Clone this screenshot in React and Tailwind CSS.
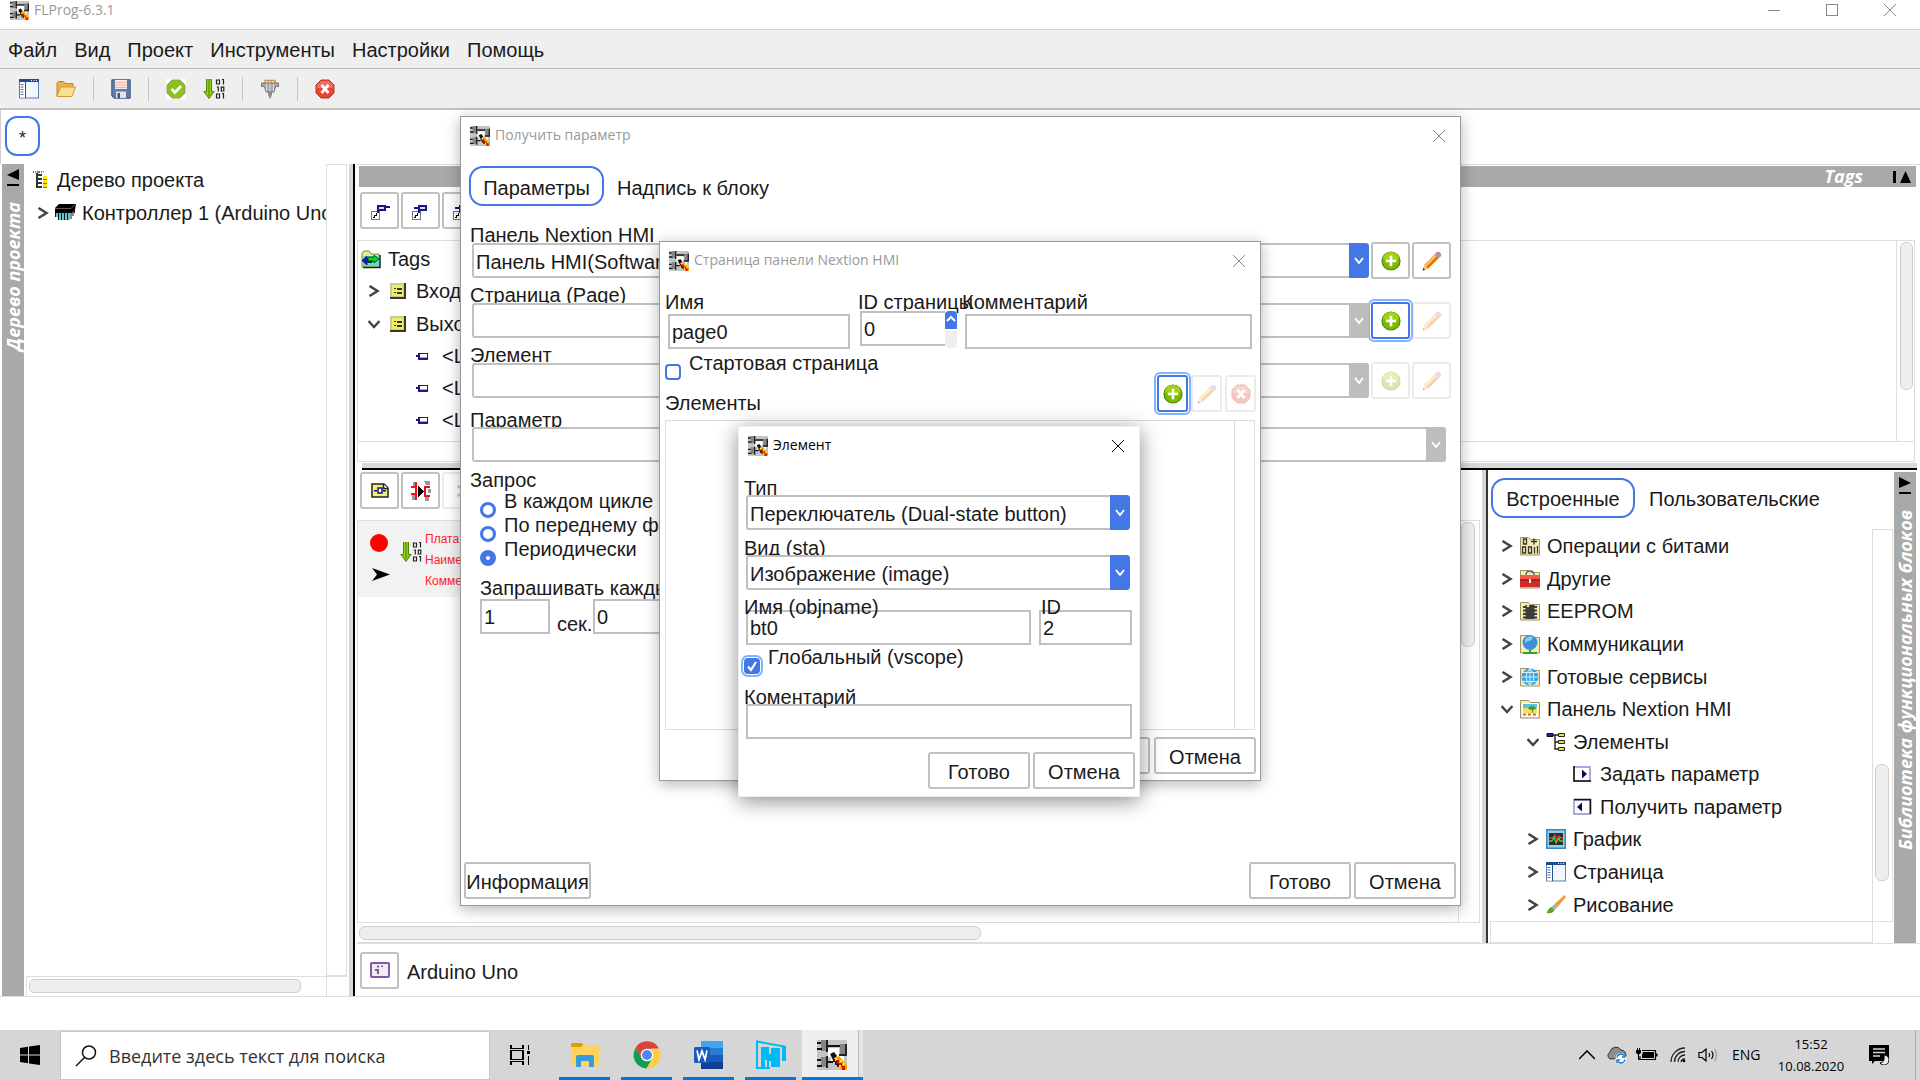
import clsx from 'clsx'

const menus = ['Файл', 'Вид', 'Проект', 'Инструменты', 'Настройки', 'Помощь']

const library = [
  { icon: 'bits', label: 'Операции с битами', level: 0 },
  { icon: 'toolbox', label: 'Другие', level: 0 },
  { icon: 'eeprom', label: 'EEPROM', level: 0 },
  { icon: 'comm', label: 'Коммуникации', level: 0 },
  { icon: 'web', label: 'Готовые сервисы', level: 0 },
  { icon: 'hmi', label: 'Панель Nextion HMI', level: 0, open: true },
  { icon: 'elements', label: 'Элементы', level: 1, open: true },
  { icon: 'set', label: 'Задать параметр', level: 2, leaf: true },
  { icon: 'get', label: 'Получить параметр', level: 2, leaf: true },
  { icon: 'chart', label: 'График', level: 1 },
  { icon: 'page', label: 'Страница', level: 1 },
  { icon: 'brush', label: 'Рисование', level: 1 }
]

const indents = ['pl-[11px]', 'pl-[37px]', 'pl-[83px]']

/* ---------- icons ---------- */

function AppIcon({ className = 'size-5' }) {
  return (
    <svg viewBox="0 0 30 30" className={clsx('shrink-0', className)}>
      <rect width="30" height="30" fill="#c4c4c4" />
      <path d="M11 8h11v7h5v7H14v-5h-3z" fill="#fff" />
      <path d="M4 0h6v11H4zM23 4h6v12h-6zM4 17h6v10H4z" fill="#858585" />
      <path d="M9 0h2v12H9zM22 14h7v2h-7zM9 16h2v12H9zM28 4h2v12h-2z" fill="#222" />
      <path d="M0 2h4v2H0zM0 8h5v2H0zM11 5h12v2H11zM0 19h4v2H0zM0 25h5v2H0zM11 21h5v2h-5zM13 14l4-2 3 4-4 4z" fill="#111" />
      <path d="M17 18l5-2 8 9v5h-6z" fill="#f5a300" />
      <path d="M19 20h3v3h3v3h3v4h-3v-3h-3v-3h-3z" fill="#d81400" />
      <path d="M18 18h2v2h-2zM23 20h2v2h-2zM22 25h2v2h-2zM26 23h2v2h-2z" fill="#ffee3c" />
      <path d="M16 19h2v2h2v3h2v3h-2v-2h-2v-3h-2z" fill="#4d1200" />
    </svg>
  )
}

function Plus() {
  return (
    <svg viewBox="0 0 20 20" className="size-5">
      <circle cx="10" cy="10" r="9" fill="#7fba00" stroke="#4f8a10" strokeWidth="1.2" />
      <path d="M2 8a8 7 0 0 1 16 0q-8 3-16 0z" fill="#a2d30f" />
      <path d="M10 4.800v10.400M4.800 10h10.400" stroke="#fff" strokeWidth="2.600" />
    </svg>
  )
}

function Pencil() {
  return (
    <svg viewBox="0 0 20 20" className="size-5">
      <path d="M2 14 14.500 1.500l4 4L6 18z" fill="#f7941d" />
      <path d="M3.200 15.200 14 4" stroke="#ffc471" strokeWidth="1.800" />
      <path d="M5 17 16 6" stroke="#c8680a" strokeWidth="1.200" />
      <path d="m12.500 3.500 2-2 4 4-2 2z" fill="#9da3ad" />
      <path d="M14.300 1.700Q16-.2 18 1.500q2.200 2 .4 4z" fill="#c77bb5" />
      <path d="M2 14 .8 19.200 6 18z" fill="#e8c793" />
      <path d="m1.300 17-.6 2.400 2.500-.6z" fill="#222" />
    </svg>
  )
}

function Stop() {
  return (
    <svg viewBox="0 0 20 20" className="size-5">
      <path d="M6 1h8l5 5v8l-5 5H6l-5-5V6z" fill="#e9442f" stroke="#b3382b" />
      <path d="M6 2h8l4 4v3H2V6z" fill="#f0705d" />
      <path d="m6.500 6 7 8m0-8-7 8" stroke="#fff" strokeWidth="2.800" />
    </svg>
  )
}

function PageIcon() {
  return (
    <svg viewBox="0 0 20 20" className="size-5">
      <rect x=".5" y=".5" width="19" height="18.500" fill="#f3f6fd" stroke="#5a7bb5" />
      <path d="M0 0h20v3H0z" fill="#1d4e93" />
      <path d="M12 1.500h1m1.500 0h1m1.500 0h1" stroke="#fff" />
      <path d="M1 3.500h5v15H1z" fill="#fff" />
      <path d="M1.500 5.500h3m-3 2.500h3m-3 2.500h3m-3 2.500h3m-3 2.500h3" stroke="#5b6f92" />
      <path d="M6.500 3v16" stroke="#27508f" />
    </svg>
  )
}

function FolderOpen() {
  return (
    <svg viewBox="0 0 20 20" className="size-5">
      <path d="M1 17V4l1.500-1.500h5L9 4.500h8V9H5z" fill="#e7b34b" stroke="#c08a28" />
      <path d="M1 17.500 4.500 8h15L16 17.500z" fill="#fbdf95" stroke="#d19d39" />
    </svg>
  )
}

function Save() {
  return (
    <svg viewBox="0 0 20 20" className="size-5">
      <path d="M.8.800h18.400v18.400H3L.8 17z" fill="#5f7ba6" stroke="#3f5680" />
      <path d="M4 1h12v9H4z" fill="#fbe9e4" />
      <path d="M4 3.500h12M4 6h12M4 8.500h12" stroke="#eab9ab" />
      <path d="M5 12.500h10V19H5z" fill="#dfe3ea" />
      <path d="M6.500 14H9v5H6.500z" fill="#3f5680" />
    </svg>
  )
}

function Verify() {
  return (
    <svg viewBox="0 0 20 20" className="size-5">
      <path d="M0 0h20v20H0z" fill="#fff" />
      <path d="M6 1h8l5 5v8l-5 5H6l-5-5V6z" fill="#8cc21a" stroke="#8e9d7c" />
      <path d="m5.500 10 3.500 3.500L15 7" fill="none" stroke="#fff" strokeWidth="2.600" />
    </svg>
  )
}

// green arrow with a column of bits
function Upload({ className = 'h-5 w-[22px]' }) {
  return (
    <svg viewBox="0 0 22 20" className={className}>
      <path d="M3 0h6v12h3l-6 8-6-8h3z" fill="#8fcf12" />
      <path d="M3.500 0v12.500H1l5 6.800 5-6.800H8.500V0M6 0v17" fill="none" stroke="#4d8a0c" />
      <g fill="none" stroke="#222" strokeWidth="1.200">
        <path d="M13.500 1h3v4h-3zM19 .5h1.500V5.500M13.800 8h1.500v4.500m3-4.300h2.500v3.800h-2.500zM13.500 15h3v4h-3zM19 14.500h1.500v5" />
      </g>
    </svg>
  )
}

function Plug() {
  return (
    <svg viewBox="0 0 20 20" className="size-5">
      <path d="M5 4V1.500h10V4" fill="none" stroke="#c99b4e" strokeWidth="1.500" />
      <path d="M8.500 1v3m3-3v3" stroke="#c99b4e" />
      <path d="M1.500 4h17v3.500h-3L14 13H6L4.500 7.500h-3z" fill="#a9a9a9" stroke="#777" />
      <path d="M6.500 5v7m3.500-7v7m3.500-7v7" stroke="#dcdcdc" />
      <path d="M8 13h4v3l-2 4-2-4z" fill="#8c8c8c" />
    </svg>
  )
}

function Chip() {
  return (
    <svg viewBox="0 0 21 17" className="h-[17px] w-[21px] shrink-0">
      <path d="M4 0h17l-1 6-3 3H0V4z" fill="#000" />
      <path d="M0 4.500h16l4-4" fill="none" stroke="#888" strokeWidth=".7" />
      <path d="M2 9v4m3-4v7m3-7v7m3-7v7m3-7v7" stroke="#39c4cc" strokeWidth="1.700" />
      <path d="M.5 9v4m3-4v7m3-7v7m3-7v7m3-7v7m3.500-8v7m2-9v6m1.500-8v5" stroke="#111" />
    </svg>
  )
}

function ProjectTreeIcon() {
  return (
    <svg viewBox="0 0 16 20" className="h-5 w-4 shrink-0" shapeRendering="crispEdges">
      <path d="M0 1h1v2H0zm2 0h1v2H2zm6 0h1v2H8z" fill="#777" />
      <path d="M4 1h3v2H4zM10 1h1v1h-1z" fill="#29b329" />
      <path d="M3 3h2v15H3zM5 4h4v2H5zM5 8h4v2H5zM5 12h4v2H5zM5 16h4v2H5z" fill="#333" />
      <path d="M10 6h4v3h-4zM10 10h4v3h-4zM10 14h4v3h-4z" fill="#ffe600" />
      <path d="M10 9h4v1h-4zM10 13h4v1h-4zM10 17h4v1h-4z" fill="#8a8000" />
    </svg>
  )
}

function TagsFolder() {
  return (
    <svg viewBox="0 0 20 20" className="size-5 shrink-0">
      <path d="M1 18V4l2-2h5l2 3h8v13z" fill="#d9ef9c" stroke="#6a8f50" />
      <path d="M2 7h16v10H2z" fill="#55e0cf" />
      <path d="m1 11.500 5-4.500v2.500h5v4H6V16z" fill="#001ee0" stroke="#000" strokeWidth=".6" />
      <path d="m18 10-5-4v2H7v4h6v2z" fill="#12d312" stroke="#000" strokeWidth=".6" />
      <path d="M2 18.500h17V6" fill="none" stroke="#222" strokeWidth="1.500" />
    </svg>
  )
}

function TagGroup() {
  return (
    <svg viewBox="0 0 16 16" className="size-4 shrink-0" shapeRendering="crispEdges">
      <path d="M0 0h16v16H0z" fill="#3a3a2c" />
      <path d="M0 0h14v14H0z" fill="#c9c9a0" />
      <path d="M2 2h11v11H2z" fill="#f0ee62" />
      <path d="M4 5h2v1H4zM7 5h5v2H7zM4 9h2v1H4zM7 9h5v2H7z" fill="#333" />
    </svg>
  )
}

function TagItem() {
  return (
    <svg viewBox="0 0 12 8" className="h-2 w-3 shrink-0" shapeRendering="crispEdges">
      <path d="M0 3h3v2H0z" fill="#1a1a8c" />
      <path d="M2 1h10v7H2z" fill="#1a1a8c" />
      <path d="M4 2h7v3H4z" fill="#fff" />
      <path d="M4 5h7v1H4z" fill="#aaa" />
    </svg>
  )
}

function BlockRef({ wide }) {
  return (
    <svg viewBox="0 0 20 18" className="h-[18px] w-5" shapeRendering="crispEdges">
      <path d="M1 9h8v8H1z" fill="#fff" stroke="#777" />
      <path d="M3 15h1v-2h2v-2h1v3H5v2H3z" fill="#000" />
      <path d="M7 3h9v6H9v2H7z" fill="#16168c" />
      <path d="M9 5h5v2H9z" fill="#ddd" />
      {wide ? <path d="M16 4h4v2h-4z" fill="#16168c" /> : <path d="M3 5h4v2H3z" fill="#16168c" />}
    </svg>
  )
}

function SchemeIcon() {
  return (
    <svg viewBox="0 0 18 15" className="h-[15px] w-[18px]">
      <path d="M1 1h12l4 4v9H1z" fill="#f5ee6a" stroke="#222" strokeWidth="1.500" />
      <path d="M12.500 1v4.500H17" fill="#fff" stroke="#222" strokeWidth="1.500" />
      <path d="M7 5h4v5H7z" fill="#fff" stroke="#16168c" strokeWidth="1.500" />
      <path d="M3 7h3v1.500H3zM12 7h3v1.500h-3z" fill="#16168c" />
    </svg>
  )
}

function ConvertIcon() {
  return (
    <svg viewBox="0 0 20 20" className="size-5" shapeRendering="crispEdges">
      <path d="M2 1h3v5H2zM1 13h4v6H1zM13 0h6v4h-4zM14 15h4v5h-4zM17 8h3v4h-3z" fill="#999" />
      <path d="M4 1h2v18H4zM0 5h5v2H0zM0 12h5v2H0z" fill="#f01414" />
      <path d="M7 5l6 5-6 6z" fill="#000" />
      <path d="M13 5h6v2h-4v7h4v2h-6z" fill="#e01414" />
    </svg>
  )
}

function LibIcon({ name }) {
  const folder = <path d="M.5 19V1.500h8l2 2h9V19z" fill="#f6ecb0" stroke="#9c946c" />
  const art = {
    bits: (
      <>
        {folder}
        <path d="M3.500 3h3v5h-3zM14 2.500v6M11 5.500h6M2.500 11h3v6h-3zM8.500 11h3v6h-3zM14.500 11v6.500M17.500 10v7.500" fill="none" stroke="#333" strokeWidth="1.300" />
      </>
    ),
    toolbox: (
      <>
        {folder}
        <path d="M6 6q0-4 4-4t4 4" fill="none" stroke="#666" strokeWidth="1.500" />
        <path d="M0 6h20v12H0z" fill="#d42a26" />
        <path d="M0 6h20v4H0z" fill="#ef5a4d" />
        <path d="M0 11h20" stroke="#8e1512" />
        <path d="M9 10h2v4H9z" fill="#eee" />
      </>
    ),
    eeprom: (
      <>
        {folder}
        <path d="M5.500 4h9v14h-9z" fill="#3c3c3c" />
        <path d="M3 6h14M3 9.500h14M3 13h14M3 16.500h14" stroke="#3c3c3c" strokeWidth="1.800" />
        <circle cx="8" cy="5" r="1.200" fill="#f6ecb0" />
      </>
    ),
    comm: (
      <>
        {folder}
        <circle cx="10" cy="8.500" r="7.500" fill="#3d8ed8" />
        <path d="M5 5q4-4 8-2-1 4-4 4t-4 3z" fill="#8cc6f2" />
        <path d="M10 16v3M3 19h14" stroke="#2fa52f" strokeWidth="2" />
      </>
    ),
    web: (
      <>
        {folder}
        <circle cx="10" cy="10" r="8.500" fill="#35a3e0" />
        <path d="M10 1.500v17M1.500 10h17M3 5.500h14M3 14.500h14M10 1.500q-8 8.500 0 17 8-8.500 0-17" fill="none" stroke="#d6f0ff" />
      </>
    ),
    hmi: (
      <>
        {folder}
        <path d="M2 4h16v14H2z" fill="#fff" />
        <path d="M3 5h14v4H3z" fill="#5cc0ea" />
        <path d="M3 9h14v5H3z" fill="#f3e15c" />
        <path d="M8 10q1-3 4-3t4 3l-3 1v3h-1v-3z" fill="#4a9a28" />
        <path d="M3 15.500h3m2 0h3m2 0h3" stroke="#e2582c" strokeWidth="2" />
      </>
    ),
    elements: (
      <>
        <path d="M7 3h5M9 3v14h4M9 10h4" fill="none" stroke="#222" strokeWidth="1.400" />
        <path d="M1 1.500h6v3H1z" fill="#1a22b0" stroke="#111" />
        <path d="M12.500 1.500h6v3h-6zM12.500 8.500h6v3h-6zM12.500 15.500h6v3h-6z" fill="#ece531" stroke="#222" />
      </>
    ),
    set: (
      <>
        <path d="M1 3h16v14H1z" fill="#fff" stroke="#8c8cd0" strokeWidth="1.400" />
        <path d="M1 2v15h17" fill="none" stroke="#111" strokeWidth="1.500" />
        <path d="M9 5.500 14 10l-5 4.500z" fill="#0a0a50" />
      </>
    ),
    get: (
      <>
        <path d="M1 3h16v14H1z" fill="#fff" stroke="#8c8cd0" strokeWidth="1.400" />
        <path d="M1 2.500h16.500V17" fill="none" stroke="#111" strokeWidth="1.500" />
        <path d="M9 5.500 4 10l5 4.500z" fill="#0a0a50" />
      </>
    ),
    chart: (
      <>
        <path d="M.8.800h18.400v18.400H.8z" fill="#8fd0f0" stroke="#3688b5" strokeWidth="1.500" />
        <path d="M3 4h14v12H3z" fill="#2d2d2d" />
        <path d="M3 9h4l2-3 2 5 2-4 2 2h2" fill="none" stroke="#ee2b2b" strokeWidth="1.500" />
        <path d="M3 12h3l2-4 2 6 3-5 1 3h3" fill="none" stroke="#32d64a" strokeWidth="1.300" />
      </>
    ),
    brush: (
      <>
        <path d="M18.500 0 20 2 11.500 12 8.500 9z" fill="#f29a38" />
        <path d="m8.500 9 3 3-3 3-3-3z" fill="#a9b0b8" />
        <path d="M5.500 12q-3 1-5 6 6 1 8-3z" fill="#5da61c" />
      </>
    )
  }
  if (name === 'page') return <PageIcon />
  return (
    <svg viewBox="0 0 20 20" className="size-5 shrink-0">
      {art[name]}
    </svg>
  )
}

function Chevron({ open }) {
  return (
    <svg viewBox="0 0 12 12" className="size-3 shrink-0" fill="none" stroke="#444" strokeWidth="2.500">
      {open ? <path d="M.5 3 6 9l5.500-6" /> : <path d="m1.500 1 8 5-8 5" />}
    </svg>
  )
}

function Cross({ className }) {
  return (
    <svg viewBox="0 0 12 12" className={clsx('size-3', className)} stroke="currentColor">
      <path d="m0 0 12 12M12 0 0 12" />
    </svg>
  )
}

/* ---------- form parts ---------- */

function Button({ children, className }) {
  return (
    <button type="button" className={clsx('h-[37px] rounded-[3px] border-2 border-[#c0c0c0] bg-white pt-[2px] leading-6', className)}>
      {children}
    </button>
  )
}

function IconButton({ label, children, className = 'w-[39px]', focused, disabled }) {
  return (
    <button
      type="button"
      aria-label={label}
      disabled={disabled}
      className={clsx(
        'flex h-[37px] shrink-0 items-center justify-center rounded-[3px] border-2 bg-white',
        focused ? 'border-[#4477e6] outline-2 outline-offset-1 outline-[#80b4ff]' : 'border-[#c0c0c0]',
        disabled && 'opacity-30',
        className
      )}
    >
      {children}
    </button>
  )
}

function Label({ htmlFor, children, className = 'h-[14px]' }) {
  return (
    <label htmlFor={htmlFor} className={clsx('block leading-[14px] whitespace-nowrap', className)}>
      {children}
    </label>
  )
}

function TextField({ id, value, label, className }) {
  return (
    <input
      id={id}
      type="text"
      aria-label={label}
      defaultValue={value}
      className={clsx('block h-[35px] border-2 border-[#c0c0c0] bg-white pt-[2px] pl-[2px] outline-none', className)}
    />
  )
}

function Combo({ id, value = '', disabled, className }) {
  return (
    <div className={clsx('relative h-[35px]', className)}>
      <select
        id={id}
        disabled={disabled}
        defaultValue={value}
        className="block h-full w-full appearance-none rounded-[3px] border-2 border-[#c0c0c0] bg-white pt-[2px] pl-[2px] outline-none"
      >
        <option>{value}</option>
      </select>
      <span
        className={clsx(
          'pointer-events-none absolute inset-y-0 right-0 flex w-5 items-center justify-center rounded-r-[4px]',
          disabled ? 'bg-[#bdbdbd]' : 'bg-[#4477e6]'
        )}
      >
        <svg viewBox="0 0 10 8" className="h-2 w-[10px]" fill="none" stroke="#fff" strokeWidth="2">
          <path d="m1 1 4 5 4-5" />
        </svg>
      </span>
    </div>
  )
}

function Check({ id, label, checked }) {
  return (
    <div className="flex h-5 items-start gap-2">
      <span className="relative mt-1 size-4 shrink-0">
        <input
          id={id}
          type="checkbox"
          defaultChecked={checked}
          className={clsx(
            'block size-4 appearance-none rounded-[4px] border-2 border-[#4477e6] checked:bg-[#4477e6]',
            checked && 'outline-2 outline-offset-1 outline-[#80b4ff]'
          )}
        />
        {checked && (
          <svg viewBox="0 0 16 16" className="pointer-events-none absolute inset-0 size-4" fill="none" stroke="#fff" strokeWidth="2.200">
            <path d="m4 8.500 3 3.500 5-8" />
          </svg>
        )}
      </span>
      <label htmlFor={id} className="leading-[6px] whitespace-nowrap">{label}</label>
    </div>
  )
}

function Radio({ id, label, checked }) {
  return (
    <div className="flex h-6 items-start gap-2">
      <input
        id={id}
        type="radio"
        name="request"
        defaultChecked={checked}
        className="mt-1 block size-4 shrink-0 appearance-none rounded-full border-[3px] border-[#4477e6] bg-white checked:border-[6px]"
      />
      <label htmlFor={id} className="leading-[6px] whitespace-nowrap">{label}</label>
    </div>
  )
}

function Dialog({ title, active, className, children }) {
  return (
    <section
      role="dialog"
      aria-label={title}
      className={clsx(
        'absolute flex flex-col border bg-white',
        active ? 'border-[#f0f0f0] shadow-[0_4px_20px_rgba(0,0,0,0.45)]' : 'border-[#9a9a9a] shadow-[0_3px_14px_rgba(0,0,0,0.3)]',
        className
      )}
    >
      <header className="flex h-[37px] shrink-0 items-center gap-[5px] pr-[15px] pl-[9px]">
        <AppIcon />
        <h2 className={clsx("flex-1 pb-[2px] font-['Open_Sans','Noto_Sans',sans-serif] text-[14px]", active ? 'text-black' : 'text-[#999]')}>
          {title}
        </h2>
        <button type="button" aria-label="Закрыть" className={active ? 'text-black' : 'text-[#888]'}>
          <Cross />
        </button>
      </header>
      {children}
    </section>
  )
}

function ParameterDialog() {
  return (
    <Dialog title="Получить параметр" className="top-[116px] left-[460px] h-[790px] w-[1001px]">
      <nav className="mt-3 flex items-center pl-2">
        <button type="button" className="h-10 w-[135px] rounded-[14px] border-2 border-[#4477e6] pt-1">Параметры</button>
        <button type="button" className="px-[13px] pt-1">Надпись к блоку</button>
      </nav>

      <form className="mt-[22px] flex flex-1 flex-col pr-[9px] pl-[9px]">
        <Label htmlFor="panel">Панель Nextion HMI</Label>
        <div className="flex items-center gap-[2px] pl-[2px]">
          <Combo id="panel" value="Панель HMI(SoftwareSerial)" className="flex-1" />
          <IconButton label="Добавить панель"><Plus /></IconButton>
          <IconButton label="Изменить панель"><Pencil /></IconButton>
        </div>

        <Label htmlFor="page" className="mt-[9px] h-[14px]">Страница (Page)</Label>
        <div className="flex items-center gap-[2px] pl-[2px]">
          <Combo id="page" disabled className="flex-1" />
          <IconButton label="Добавить страницу" focused><Plus /></IconButton>
          <IconButton label="Изменить страницу" disabled><Pencil /></IconButton>
        </div>

        <Label htmlFor="element" className="mt-[9px] h-[14px]">Элемент</Label>
        <div className="flex items-center gap-[2px] pl-[2px]">
          <Combo id="element" disabled className="flex-1" />
          <IconButton label="Добавить элемент" disabled><Plus /></IconButton>
          <IconButton label="Изменить элемент" disabled><Pencil /></IconButton>
        </div>

        <Label htmlFor="param" className="mt-[14px] h-[14px]">Параметр</Label>
        <Combo id="param" disabled className="mr-[5px] ml-[2px]" />

        <fieldset className="mt-[11px]">
          <legend className="block h-[14px] leading-[14px]">Запрос</legend>
          <div className="mt-[11px] pl-[10px]">
            <Radio id="every" label="В каждом цикле" />
            <Radio id="front" label="По переднему фронту" />
            <Radio id="period" label="Периодически" checked />
            <Label htmlFor="seconds" className="mt-[11px] h-[14px]">Запрашивать каждые</Label>
            <div className="mt-1 flex items-end">
              <TextField id="seconds" value="1" className="w-[70px]" />
              <span className="w-[43px] pt-[2px] pl-[7px] leading-5">сек.</span>
              <TextField label="Миллисекунды" value="0" className="w-[70px]" />
            </div>
          </div>
        </fieldset>
      </form>

      <footer className="flex gap-[3px] pr-1 pb-[6px] pl-[3px]">
        <Button className="mr-auto w-[127px]">Информация</Button>
        <Button className="w-[102px]">Готово</Button>
        <Button className="w-[102px]">Отмена</Button>
      </footer>
    </Dialog>
  )
}

function PageDialog() {
  return (
    <Dialog title="Страница панели Nextion HMI" className="top-[241px] left-[659px] h-[540px] w-[602px]">
      <form className="mt-4 flex flex-1 flex-col pr-[5px] pl-[5px]">
        <div className="flex pr-[3px]">
          <div className="w-[193px]">
            <Label htmlFor="page-name">Имя</Label>
            <TextField id="page-name" value="page0" className="mt-[5px] ml-[3px] w-[182px]" />
          </div>
          <div className="w-[104px]">
            <Label htmlFor="page-id">ID страницы</Label>
            <div className="mt-[2px] ml-[2px] flex items-start">
              <TextField id="page-id" value="0" className="w-[85px] border-r-0" />
              <div className="flex w-3 flex-col gap-[2px]">
                <button type="button" aria-label="Больше" className="flex h-[18px] justify-center rounded-t-[4px] bg-[#4477e6] pt-1">
                  <svg viewBox="0 0 10 8" className="h-2 w-[10px]" fill="none" stroke="#fff" strokeWidth="2">
                    <path d="m1 6 4-4 4 4" />
                  </svg>
                </button>
                <button type="button" aria-label="Меньше" className="h-[17px] rounded-b-[4px] bg-[#eee]" />
              </div>
            </div>
          </div>
          <div className="flex-1">
            <Label htmlFor="page-comment">Комментарий</Label>
            <TextField id="page-comment" className="mt-[5px] ml-[3px] w-[287px]" />
          </div>
        </div>

        <div className="mt-[11px] flex h-[60px] justify-between">
          <div>
            <Check id="start-page" label="Стартовая страница" />
            <h3 className="mt-4 leading-[14px]">Элементы</h3>
          </div>
          <div className="mt-[15px] -mr-px flex items-start gap-[3px]">
            <IconButton label="Добавить" className="w-[31px]" focused><Plus /></IconButton>
            <IconButton label="Изменить" className="w-[31px]" disabled><Pencil /></IconButton>
            <IconButton label="Удалить" className="w-[31px]" disabled><Stop /></IconButton>
          </div>
        </div>

        <div className="flex flex-1 border border-[#dcdcdc]">
          <div className="flex-1" />
          <div className="w-5 border-l border-[#dcdcdc]" />
        </div>
      </form>

      <footer className="mt-[7px] flex justify-end gap-1 pr-1 pb-[6px]">
        <Button className="w-[102px]">Готово</Button>
        <Button className="w-[102px]">Отмена</Button>
      </footer>
    </Dialog>
  )
}

function ElementDialog() {
  return (
    <Dialog title="Элемент" active className="top-[426px] left-[738px] w-[402px]">
      <form className="mt-[17px] pr-[7px] pl-[5px]">
        <Label htmlFor="type">Тип</Label>
        <Combo id="type" value="Переключатель (Dual-state button)" className="mr-[2px] ml-[2px]" />
        <Label htmlFor="sta" className="mt-[11px] h-[14px]">Вид (sta)</Label>
        <Combo id="sta" value="Изображение (image)" className="mr-[2px] ml-[2px]" />

        <div className="mt-[10px] flex gap-2 pl-[2px]">
          <div className="flex-1">
            <Label htmlFor="objname" className="-ml-[2px] h-[10px]">Имя (objname)</Label>
            <TextField id="objname" value="bt0" className="w-full" />
          </div>
          <div className="w-[93px]">
            <Label htmlFor="obj-id" className="h-[10px] pl-[2px]">ID</Label>
            <TextField id="obj-id" value="2" className="w-full" />
          </div>
        </div>

        <div className="mt-[9px]">
          <Check id="vscope" label="Глобальный (vscope)" checked />
        </div>
        <Label htmlFor="comment" className="mt-4 h-[14px]">Коментарий</Label>
        <div className="pl-[2px]">
          <TextField id="comment" className="w-full" />
        </div>
      </form>

      <footer className="mt-[13px] flex justify-end gap-[3px] pr-1 pb-[7px]">
        <Button className="w-[102px]">Готово</Button>
        <Button className="w-[102px]">Отмена</Button>
      </footer>
    </Dialog>
  )
}

/* ---------- main window ---------- */

function SideStrip({ title, flip, className }) {
  return (
    <aside className={clsx('flex shrink-0 flex-col items-center bg-[#a9a9a9] text-white', className)}>
      <button type="button" aria-label={title} className="mt-[5px]">
        <svg viewBox="0 0 12 18" className="h-[18px] w-3" fill="#000">
          {flip ? <path d="m0 0 12 6-12 5z" /> : <path d="M12 0v11L0 6z" />}
          <path d="M0 15h12v2H0z" />
        </svg>
      </button>
      <span className="mt-[15px] rotate-180 font-['Open_Sans','Noto_Sans',sans-serif] text-[18px] leading-[22px] font-bold whitespace-nowrap italic [writing-mode:vertical-rl]">
        {title}
      </span>
    </aside>
  )
}

function TopBars() {
  const sep = <span className="h-6 w-px bg-[#c4c4c4]" />
  return (
    <>
      <header className="flex h-[29px] items-start justify-between pl-[10px]">
        <div className="flex items-center gap-[5px]">
          <AppIcon className="size-[19px]" />
          <span className="font-['Open_Sans','Noto_Sans',sans-serif] text-[14px] leading-5 text-[#999]">FLProg-6.3.1</span>
        </div>
        <div className="flex gap-[46px] pt-1 pr-6 text-[#888]">
          <button type="button" aria-label="Свернуть" className="flex size-3 items-center">
            <span className="h-px w-full bg-current" />
          </button>
          <button type="button" aria-label="Развернуть" className="size-3 border border-current" />
          <button type="button" aria-label="Закрыть окно"><Cross /></button>
        </div>
      </header>
      <nav className="flex h-10 items-center gap-[17px] border-t border-b border-t-[#d6d6d6] border-b-[#b8b8b8] bg-[#efefef] pt-[2px] pl-[8px]">
        {menus.map((m) => (
          <button key={m} type="button">{m}</button>
        ))}
      </nav>
      <div className="flex h-[41px] items-center gap-[17px] border-b-2 border-[#c2c2c2] bg-[#efefef] pl-[19px]">
        <button type="button" aria-label="Новый"><PageIcon /></button>
        <button type="button" aria-label="Открыть"><FolderOpen /></button>
        {sep}
        <button type="button" aria-label="Сохранить"><Save /></button>
        {sep}
        <button type="button" aria-label="Проверить"><Verify /></button>
        <button type="button" aria-label="Загрузить"><Upload /></button>
        {sep}
        <button type="button" aria-label="Порт"><Plug /></button>
        {sep}
        <button type="button" aria-label="Закрыть проект"><Stop /></button>
      </div>
    </>
  )
}

function ProjectTree() {
  return (
    <div className="flex w-[323px] shrink-0 flex-col">
      <div className="flex min-h-0 flex-1">
        <ul className="flex-1 overflow-hidden whitespace-nowrap">
          <li className="flex h-8 items-center gap-2 pl-[9px]">
            <ProjectTreeIcon />
            Дерево проекта
          </li>
          <li className="flex h-[33px] items-center gap-[6px] pl-[13px]">
            <Chevron />
            <Chip />
            Контроллер 1 (Arduino Uno)
          </li>
        </ul>
        <div className="w-[21px] border border-[#dedede]" />
      </div>
      <div className="ml-[2px] flex h-5 border-t border-l border-[#dedede]">
        <div className="mt-[2px] ml-[2px] h-[14px] w-[272px] rounded-[5px] border border-[#cfcfcf] bg-[#eee]" />
        <div className="ml-auto w-[21px] border-l border-[#dedede]" />
      </div>
    </div>
  )
}

function TagsPanel() {
  return (
    <>
      <header className="mt-px mr-1 ml-[2px] flex h-[21px] items-center justify-end bg-[#a9a9a9] pr-[5px] text-white">
        <span className="mr-[30px] pb-[2px] font-['Open_Sans','Noto_Sans',sans-serif] text-[18px] leading-5 font-bold italic">Tags</span>
        <button type="button" aria-label="Свернуть Tags">
          <svg viewBox="0 0 18 12" className="h-3 w-[18px]" fill="#000">
            <path d="M0 0h3v12H0zM7 12l5.500-12L18 12z" />
          </svg>
        </button>
      </header>
      <div className="mt-[5px] flex gap-[2px] pl-[3px]">
        <IconButton label="Блок"><BlockRef wide /></IconButton>
        <IconButton label="Вход"><BlockRef /></IconButton>
        <IconButton label="Выход"><BlockRef /></IconButton>
      </div>
      <div className="mt-[11px] mr-[5px] flex h-[222px] shrink-0 flex-col border border-[#dedede]">
        <div className="flex flex-1">
          <ul className="flex-1 pt-[2px] whitespace-nowrap">
            <li className="flex h-8 items-center gap-[7px] pl-[3px]"><TagsFolder />Tags</li>
            <li className="flex h-8 items-center gap-[10px] pl-[10px]"><Chevron /><TagGroup />Входы</li>
            <li className="flex h-[33px] items-center gap-[10px] pl-[10px]"><Chevron open /><TagGroup />Выходы</li>
            {[1, 2, 3].map((n) => (
              <li key={n} className="flex h-8 items-center gap-[14px] pl-[58px]"><TagItem />&lt;L{n}&gt;</li>
            ))}
          </ul>
          <div className="w-[18px] border-l border-[#dedede]">
            <div className="mt-[1px] ml-[3px] h-[148px] w-[13px] rounded-[6px] border border-[#cfcfcf] bg-[#eee]" />
          </div>
        </div>
        <div className="h-5 border-t border-[#dedede]" />
      </div>
      <div className="mt-px mr-[3px] ml-[5px] h-[7px] shrink-0 border-b-2 border-black bg-[#d9d9d9]" />
    </>
  )
}

function Canvas() {
  return (
    <div className="flex min-w-0 flex-1 flex-col">
      <div className="mt-[2px] flex gap-[2px] pl-[3px]">
        <IconButton label="Схема"><SchemeIcon /></IconButton>
        <IconButton label="Преобразовать"><ConvertIcon /></IconButton>
        <IconButton label="Вверх" disabled><Chevron /></IconButton>
      </div>
      <div className="mt-[11px] flex flex-1 border border-[#dedede]">
        <div className="flex-1">
          <div className="flex h-[76px] items-start bg-[#f2f2f2] pl-[12px]">
            <svg viewBox="0 0 20 56" className="mt-3 h-14 w-5">
              <circle cx="9" cy="10" r="9" fill="#f00" />
              <path d="m2 35 18 6.500L2 48l5-6.500z" fill="#000" />
            </svg>
            <Upload className="mt-[21px] ml-[10px] h-5 w-[22px]" />
            <p className="ml-[3px] pt-[8px] text-[12px] leading-[21px] text-[#f22]">
              Плата:<br />Наименование:<br />Комментарий:
            </p>
          </div>
        </div>
        <div className="w-[21px] border-l border-[#dedede]">
          <div className="mt-[1px] ml-[2px] h-[125px] w-[14px] rounded-[6px] border border-[#cfcfcf] bg-[#eee]" />
        </div>
      </div>
      <div className="h-5 border-b border-[#dedede]">
        <div className="mt-[3px] ml-[2px] h-[14px] w-[622px] rounded-[6px] border border-[#cfcfcf] bg-[#eee]" />
      </div>
    </div>
  )
}

function Library() {
  return (
    <div className="ml-[2px] flex w-[403px] shrink-0 flex-col">
      <nav className="mt-2 flex h-[51px] items-start">
        <button type="button" className="ml-px h-10 w-[144px] rounded-[14px] border-2 border-[#4477e6] pt-[2px]">Встроенные</button>
        <button type="button" className="ml-[14px] h-10 pt-[2px]">Пользовательские</button>
      </nav>
      <div className="flex min-h-0 flex-1 border-b border-[#dedede]">
        <ul className="flex flex-1 flex-col pt-px whitespace-nowrap">
          {library.map((item) => (
            <li key={item.label} className={clsx('flex flex-1 items-center gap-[7px]', indents[item.level])}>
              {!item.leaf && <Chevron open={item.open} />}
              <LibIcon name={item.icon} />
              {item.label}
            </li>
          ))}
        </ul>
        <div className="w-[21px] border border-b-0 border-[#dedede]">
          <div className="mt-[234px] ml-[2px] h-[117px] w-[14px] rounded-[6px] border border-[#cfcfcf] bg-[#eee]" />
        </div>
      </div>
      <div className="mr-5 h-[21px] border border-t-0 border-[#dedede]" />
    </div>
  )
}

/* ---------- taskbar ---------- */

const apps = [
  {
    name: 'Проводник',
    icon: (
      <svg viewBox="0 0 30 30" className="size-[30px]">
        <path d="M1 3h11l2 3h-2v3H1z" fill="#e29c00" />
        <path d="M1 7h10l2-2h16v21H1z" fill="#ffd35e" />
        <path d="M6 27V17q0-2 2-2h14q2 0 2 2v10h-5v-6h-8v6z" fill="#3b99e0" />
      </svg>
    )
  },
  {
    name: 'Chrome',
    icon: (
      <svg viewBox="0 0 30 30" className="size-[30px]">
        <path d="M3.300 8.250A13.500 13.500 0 0 1 27 8.500L15 9 9 18.500z" fill="#db4437" />
        <path d="M3.300 8.250A13.500 13.500 0 0 0 14.500 28.500L20.500 18 9.500 18.500z" fill="#0f9d58" />
        <path d="M27 8.750A13.500 13.500 0 0 1 14.500 28.500L20.800 17.500 19 8.750z" fill="#ffcd40" />
        <circle cx="15" cy="15" r="6.300" fill="#fff" />
        <circle cx="15" cy="15" r="5" fill="#4c8bf5" />
      </svg>
    )
  },
  {
    name: 'Word',
    icon: (
      <svg viewBox="0 0 30 30" className="size-[30px]">
        <path d="M7 1h22v8H7z" fill="#41a5ee" />
        <path d="M7 8h22v8H7z" fill="#2b7cd3" />
        <path d="M7 15h22v7H7z" fill="#185abd" />
        <path d="M7 22h22v7H7z" fill="#103f91" />
        <rect y="7" width="16" height="16" rx="1.500" fill="#185abd" />
        <path d="m3 10.500 2 9L8 11l3 8.500 2-9" fill="none" stroke="#fff" strokeWidth="1.800" />
      </svg>
    )
  },
  {
    name: 'Nextion Editor',
    icon: (
      <svg viewBox="0 0 30 30" className="size-[30px]">
        <path d="M1 28V1.500L28.500 6.500V21" fill="none" stroke="#00b9f7" strokeWidth="2" />
        <path d="M26 6h4v15h-4z" fill="#00b9f7" />
        <path d="M0 27h14v2H0z" fill="#00b9f7" />
        <path d="M5 7h8v7h2V8h9v19h-9v-6h-2v6h-2v-7h-2v7H5z" fill="#00b9f7" />
      </svg>
    )
  }
]

function Taskbar() {
  return (
    <footer className="flex h-[50px] shrink-0 items-stretch bg-[#d6d6d6] font-['Open_Sans','Noto_Sans',sans-serif] text-[14px] text-black">
      <button type="button" aria-label="Пуск" className="flex w-[60px] items-center justify-center">
        <svg viewBox="0 0 20 20" className="size-5">
          <path d="m0 3 8-1.200v7.700H0zM9 1.600 20 0v9.500H9zM0 10.500h8v7.700L0 17zM9 10.500h11V20L9 18.400z" />
        </svg>
      </button>
      <label className="mt-px flex w-[430px] items-center gap-3 border border-[#c8c8c8] bg-white pl-[14px]">
        <svg viewBox="0 0 22 22" className="size-[22px] shrink-0" fill="none" stroke="#111" strokeWidth="1.500">
          <circle cx="14" cy="7.500" r="6.500" />
          <path d="M9.500 12.500 1 21" />
        </svg>
        <input
          type="text"
          aria-label="Поиск"
          placeholder="Введите здесь текст для поиска"
          className="w-full text-[18px] outline-none placeholder:text-[#333]"
        />
      </label>
      <button type="button" aria-label="Представление задач" className="flex w-[60px] items-center justify-center">
        <svg viewBox="0 0 20 20" className="size-5" fill="none" stroke="#000" strokeWidth="1.300" shapeRendering="crispEdges">
          <path d="M1 0v3.500h12V0M1 5.500h12v9H1zM1 20v-3.500h12V20M18.500 0v5M18.500 11v9" />
          <path d="M17 6h3v3h-3z" fill="#000" stroke="none" />
        </svg>
      </button>
      <div className="flex gap-[11px] pl-[9px]">
        {apps.map((app) => (
          <button key={app.name} type="button" aria-label={app.name} className="flex w-[51px] items-center justify-center border-b-[3px] border-[#0078d7] pt-[2px]">
            {app.icon}
          </button>
        ))}
      </div>
      <div className="ml-[6px] flex border-b-[3px] border-[#0078d7]">
        <button type="button" aria-label="FLProg" className="flex w-[57px] items-center justify-center border-r border-[#bbb] bg-[#efefef] pt-[2px] pl-1">
          <AppIcon className="size-[30px]" />
        </button>
        <span className="w-1 bg-[#e4e4e4]" />
      </div>

      <div className="ml-auto flex items-center">
        <svg viewBox="0 0 16 10" className="h-[10px] w-4" fill="none" stroke="#000" strokeWidth="1.500">
          <path d="m0 9 8-8 8 8" />
        </svg>
        <svg viewBox="0 0 22 20" className="ml-[11px] h-5 w-[22px]">
          <path d="M4 14a4 4 0 0 1 0-7 6 6 0 0 1 11-2 5 5 0 0 1 4 8z" fill="#8e8e8e" stroke="#333" />
          <circle cx="15" cy="13.500" r="5.500" fill="#fff" />
          <path d="M11 12.500a4 4 0 0 1 7-2m1-1.500v3h-3m3 2.500a4 4 0 0 1-7 2m-1 1.500v-3h3" fill="none" stroke="#1976d2" strokeWidth="1.400" />
        </svg>
        <svg viewBox="0 0 22 14" className="ml-2 h-[14px] w-[22px]">
          <path d="M6 2.500h13.500v9H4V8" fill="none" stroke="#000" strokeWidth="1.200" />
          <path d="M7 4h11v6H6V7zM20 5.500h1.500v3H20zM0 2h5v3l-2 1.500H2L0 5z" />
          <path d="M1.500 0v2m2-2v2M2.500 6v5.500H5" fill="none" stroke="#000" />
        </svg>
        <svg viewBox="0 0 16 16" className="ml-[12px] size-4" fill="none" stroke="#222" strokeWidth="1.300">
          <path d="M1 15A14 14 0 0 1 15 1M4.500 15A10.500 10.500 0 0 1 15 4.500M8 15a7 7 0 0 1 7-7M11 15a4 4 0 0 1 4-3" />
          <circle cx="14" cy="14" r="1.300" fill="#000" stroke="none" />
        </svg>
        <svg viewBox="0 0 21 16" className="ml-[12px] h-4 w-[21px]" fill="none" stroke="#000" strokeWidth="1.200">
          <path d="M1 5.500h3L8 2v12l-4-3.500H1z" />
          <path d="M11 6q1.500 2 0 4M13.500 4q3 4 0 8" />
          <path d="M16.500 2q4 6 0 12" stroke="#999" />
        </svg>
        <span className="ml-[13px] w-[28px]">ENG</span>
        <div className="ml-[16px] w-[70px] text-center text-[13px] leading-[22px]">
          <div>15:52</div>
          <div>10.08.2020</div>
        </div>
        <svg viewBox="0 0 20 20" className="mr-[26px] ml-[23px] size-5">
          <path d="M0 0h20v16H6l-3 3v-3H0z" />
          <path d="M4 4h12M4 7.500h12M4 11h7" stroke="#d6d6d6" strokeWidth="1.500" />
          <path d="M15 10a5 5 0 1 1-4 8q5 0 4-8z" fill="#eee" stroke="#000" />
        </svg>
        <span className="mr-1 h-[50px] w-px bg-[#aaa]" />
      </div>
    </footer>
  )
}

export default function App() {
  return (
    <div className="relative flex h-screen min-h-[1000px] flex-col overflow-hidden bg-white font-['Liberation_Sans',Arial,sans-serif] text-[20px] leading-6 text-[#1a1a1a]">
      <TopBars />
      <div className="flex h-[54px] shrink-0 border-l border-[#cfcfcf] pt-[6px] pl-1">
        <button type="button" className="h-10 w-[35px] rounded-[12px] border-2 border-[#4477e6] pt-1 text-[18px]">*</button>
      </div>

      <main className="mb-[33px] flex min-h-0 flex-1 border-b border-[#dedede]">
        <SideStrip title="Дерево проекта" className="ml-[2px] w-[22px]" />
        <ProjectTree />
        <div className="ml-[2px] w-[6px] shrink-0 border-r-2 border-black bg-[#d6d6d6]" />
        <div className="ml-[2px] flex min-w-0 flex-1 flex-col border-t border-[#dedede]">
          <TagsPanel />
          <div className="flex min-h-0 flex-1">
            <Canvas />
            <div className="ml-[2px] w-[6px] shrink-0 border-r-2 border-[#333] bg-[#d6d6d6]" />
            <Library />
            <SideStrip title="Библиотека функциональных блоков" flip className="mt-[2px] mr-1 ml-px w-[22px]" />
          </div>
          <div className="flex h-[53px] shrink-0 items-center gap-2 border-t border-[#dedede] pl-[3px]">
            <IconButton label="Контроллер">
              <svg viewBox="0 0 20 17" className="h-[17px] w-5">
                <rect x="1" y="1" width="18" height="14" rx="1" fill="#eee" stroke="#8457a8" strokeWidth="2" />
                <path d="M7 3.500h2v2H7zM5 7h4v5H7V9H5zM11 3.500h2V5h-2z" fill="#8457a8" />
              </svg>
            </IconButton>
            <span className="pt-1">Arduino Uno</span>
          </div>
        </div>
      </main>

      <Taskbar />

      <ParameterDialog />
      <PageDialog />
      <ElementDialog />
    </div>
  )
}
